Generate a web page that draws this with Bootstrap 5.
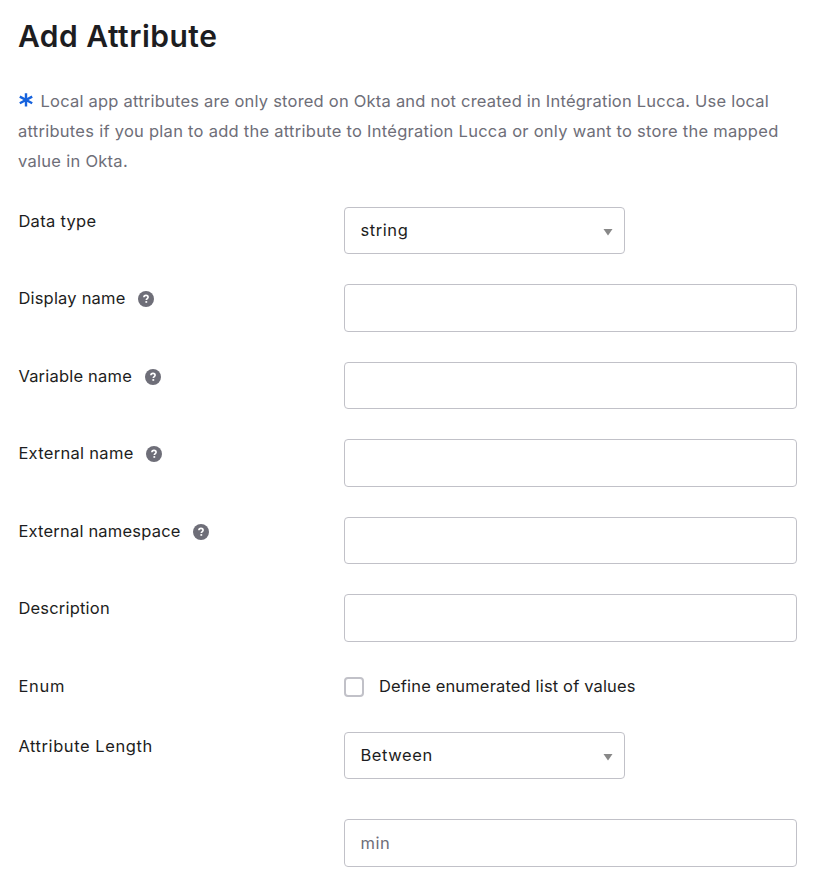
<!DOCTYPE html>
<html lang="en">
<head>
<meta charset="utf-8">
<meta name="viewport" content="width=device-width, initial-scale=1">
<title>Add Attribute</title>
<link href="https://cdn.jsdelivr.net/npm/bootstrap@5.3.0/dist/css/bootstrap.min.css" rel="stylesheet">
<style>
body{font-family:Inter,"Liberation Sans",sans-serif;font-size:16.5px;line-height:30px;letter-spacing:.2px;color:#1d1d21;background:#fff;overflow:hidden}
.attr-page{padding:14.5px 16px 0 18px}
.attr-title{font-size:30px;font-weight:600;line-height:42px;letter-spacing:.5px;margin-bottom:29.5px}
.attr-note{color:#6e6e78;margin-bottom:30.6px;white-space:nowrap;letter-spacing:.28px}
.note-a{letter-spacing:.218px}
.note-b{letter-spacing:.267px}
.note-star{width:14px;height:14px;margin-left:.7px;margin-right:7.8px;vertical-align:.5px;display:inline-block}
.attr-form{display:flex;flex-direction:column;gap:30px}
.attr-label{width:326px;flex:none;height:30px;display:flex;align-items:center;margin-top:-.7px;margin-bottom:.7px;padding-left:.4px}
.attr-help{width:16px;height:16px;margin-left:12.6px;margin-top:2px}
.attr-field,.attr-select{height:47.5px;border:1px solid #c1c1c8;border-radius:4px;padding:0 15.5px;font-size:16.5px;line-height:30px;letter-spacing:inherit;color:#1d1d21;box-shadow:none}
.attr-field::placeholder{color:#6e6e78;opacity:1}
.attr-select{width:281px;background:#fff;display:flex;align-items:center;justify-content:space-between;padding-right:11px;padding-bottom:1.2px;text-align:left}
.attr-select svg{margin-top:3.5px}
.attr-check.form-check-input{width:20px;height:20px;border:2px solid #c1c1c8;border-radius:4px;margin:2px 15px 0 0;float:none}
.sp-wide{letter-spacing:.57px}
.sp-enum{letter-spacing:.75px}
.sp-mid{letter-spacing:.3px}
.sp-tight{letter-spacing:.15px}
.attr-min{margin-top:10px}
.attr-enum{height:30px;margin-top:-.7px}
</style>
</head>
<body>
<main class="attr-page">
  <h1 class="attr-title">Add Attribute</h1>
  <p class="attr-note"><svg class="note-star" viewBox="0 0 14 14" fill="none" stroke="#1662dd" stroke-width="2.4" aria-hidden="true"><path d="M7 .3v13.2M.8 3.6l12.4 6.6M13.2 3.6L.8 10.2"/></svg><span class="note-a">Local app attributes are only stored on Okta and not created in Intégration Lucca. Use local</span><br><span class="note-b">attributes if you plan to add the attribute to Intégration Lucca or only want to store the mapped</span><br>value in Okta.</p>

  <form class="attr-form">
    <div class="d-flex">
      <label class="attr-label sp-mid">Data type</label>
      <button type="button" class="attr-select sp-wide"><span>string</span><svg width="10" height="8" aria-hidden="true"><path d="M.5 1h9L5 7.5z" fill="#888"/></svg></button>
    </div>
    <div class="d-flex">
      <label class="attr-label" for="displayName">Display name<svg class="attr-help" viewBox="0 0 16 16" aria-hidden="true"><circle cx="8" cy="8" r="8" fill="#6e6e78"/><path d="M5.9 6.3C5.9 5 6.8 4.4 8 4.4s2.1.7 2.1 1.8c0 1.4-1.8 1.4-1.8 2.9" fill="none" stroke="#fff" stroke-width="1.6"/><path d="M7.4 10.1h1.8v1.7H7.4z" fill="#fff"/></svg></label>
      <input id="displayName" class="form-control attr-field">
    </div>
    <div class="d-flex">
      <label class="attr-label" for="variableName">Variable name<svg class="attr-help" viewBox="0 0 16 16" aria-hidden="true"><circle cx="8" cy="8" r="8" fill="#6e6e78"/><path d="M5.9 6.3C5.9 5 6.8 4.4 8 4.4s2.1.7 2.1 1.8c0 1.4-1.8 1.4-1.8 2.9" fill="none" stroke="#fff" stroke-width="1.6"/><path d="M7.4 10.1h1.8v1.7H7.4z" fill="#fff"/></svg></label>
      <input id="variableName" class="form-control attr-field">
    </div>
    <div class="d-flex">
      <label class="attr-label sp-mid" for="externalName">External name<svg class="attr-help" viewBox="0 0 16 16" aria-hidden="true"><circle cx="8" cy="8" r="8" fill="#6e6e78"/><path d="M5.9 6.3C5.9 5 6.8 4.4 8 4.4s2.1.7 2.1 1.8c0 1.4-1.8 1.4-1.8 2.9" fill="none" stroke="#fff" stroke-width="1.6"/><path d="M7.4 10.1h1.8v1.7H7.4z" fill="#fff"/></svg></label>
      <input id="externalName" class="form-control attr-field">
    </div>
    <div class="d-flex">
      <label class="attr-label" for="externalNamespace">External namespace<svg class="attr-help" viewBox="0 0 16 16" aria-hidden="true"><circle cx="8" cy="8" r="8" fill="#6e6e78"/><path d="M5.9 6.3C5.9 5 6.8 4.4 8 4.4s2.1.7 2.1 1.8c0 1.4-1.8 1.4-1.8 2.9" fill="none" stroke="#fff" stroke-width="1.6"/><path d="M7.4 10.1h1.8v1.7H7.4z" fill="#fff"/></svg></label>
      <input id="externalNamespace" class="form-control attr-field">
    </div>
    <div class="d-flex">
      <label class="attr-label" for="description">Description</label>
      <input id="description" class="form-control attr-field">
    </div>
    <div class="d-flex">
      <span class="attr-label sp-enum">Enum</span>
      <div class="d-flex align-items-center attr-enum">
        <input id="enumList" type="checkbox" class="form-check-input attr-check">
        <label class="sp-tight" for="enumList">Define enumerated list of values</label>
      </div>
    </div>
    <div class="d-flex">
      <label class="attr-label sp-wide">Attribute Length</label>
      <button type="button" class="attr-select sp-wide"><span>Between</span><svg width="10" height="8" aria-hidden="true"><path d="M.5 1h9L5 7.5z" fill="#888"/></svg></button>
    </div>
    <div class="d-flex attr-min">
      <span class="attr-label"></span>
      <input class="form-control attr-field sp-wide" placeholder="min" aria-label="Minimum length">
    </div>
  </form>
</main>
<script src="https://cdn.jsdelivr.net/npm/bootstrap@5.3.0/dist/js/bootstrap.bundle.min.js"></script>
</body>
</html>
